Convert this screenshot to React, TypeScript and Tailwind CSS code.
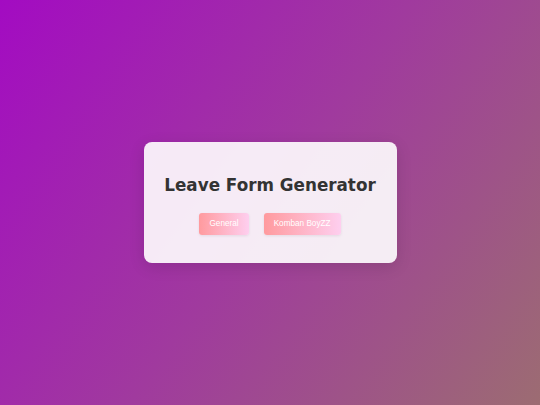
export default function App() {
  const groups = ['General', 'Komban BoyZZ']

  return (
    <div className="min-h-screen w-full flex items-center justify-center bg-[linear-gradient(125deg,#a30bc2_0%,#a03a9e_50%,#9c6c72_100%)]">
      <div className="w-[253px] h-[121px] rounded-lg bg-white/90 shadow-[0_4px_16px_rgba(0,0,0,0.12)] flex flex-col items-center pt-[34px]">
        <h1 className="font-['DejaVu_Sans',sans-serif] font-bold text-[16.8px] leading-[19px] text-[#333]">
          Leave Form Generator
        </h1>
        <div className="mt-[18px] flex gap-[15px]">
          {groups.map((g) => (
            <button
              key={g}
              className="h-[22px] px-[10px] rounded-[3px] bg-[linear-gradient(to_right,#ff9a9e_0%,#fecfef_100%)] text-white text-[8.2px] font-['Liberation_Sans',Arial,sans-serif] shadow-[0_1px_3px_rgba(0,0,0,0.08)]"
            >
              {g}
            </button>
          ))}
        </div>
      </div>
    </div>
  )
}
